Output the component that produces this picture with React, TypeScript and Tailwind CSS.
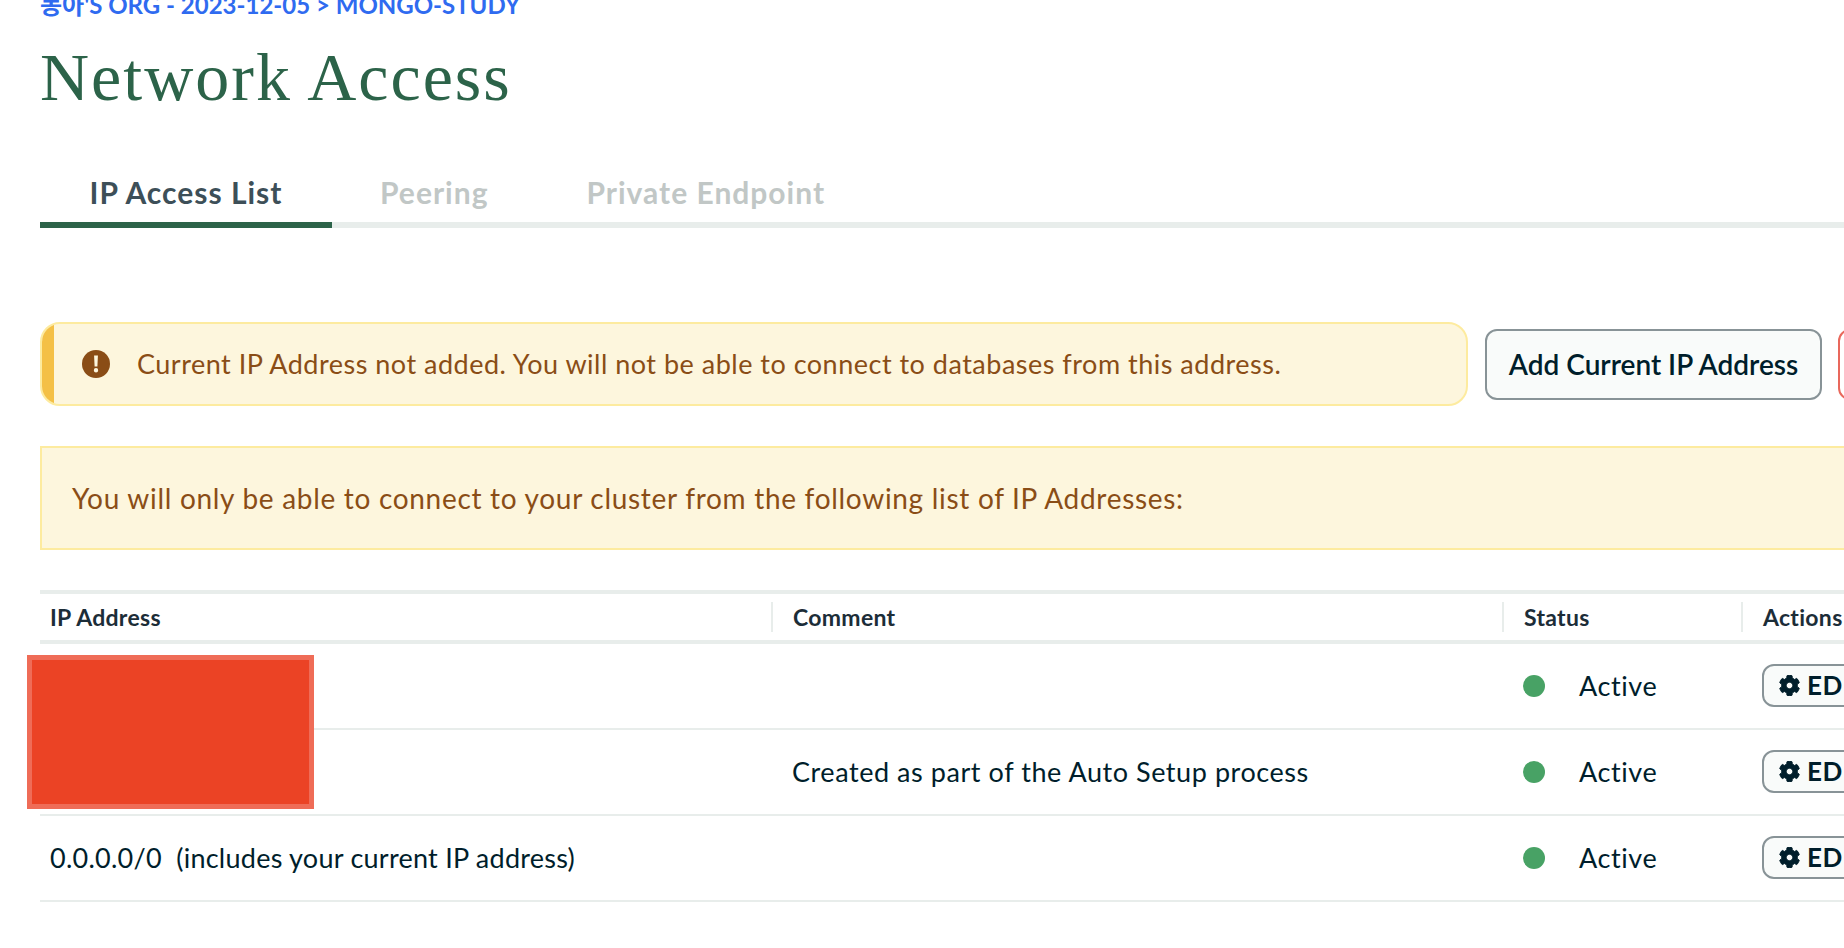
import React from "react";

const body = "[font-family:'Lato','Noto_Sans_CJK_KR',sans-serif]";

function Gear() {
  return (
    <svg viewBox="0 0 512 512" className="w-[21px] h-[21px] shrink-0" fill="#001e2b">
      <path d="M487.4 315.7l-42.6-24.6c4.3-23.2 4.3-47 0-70.2l42.6-24.6c4.9-2.8 7.1-8.6 5.5-14-11.1-35.6-30-67.8-54.7-94.6-3.8-4.1-10-5.1-14.8-2.3L380.8 110c-17.9-15.4-38.5-27.3-60.8-35.1V25.8c0-5.6-3.9-10.5-9.4-11.7-36.7-8.2-74.3-7.8-109.2 0-5.5 1.2-9.4 6.1-9.4 11.7V75c-22.2 7.9-42.8 19.8-60.8 35.1L88.7 85.5c-4.9-2.8-11-1.9-14.8 2.3-24.7 26.7-43.6 58.9-54.7 94.6-1.7 5.4.6 11.2 5.5 14L67.3 221c-4.3 23.2-4.3 47 0 70.2l-42.6 24.6c-4.9 2.8-7.1 8.6-5.5 14 11.1 35.6 30 67.8 54.7 94.6 3.8 4.1 10 5.1 14.8 2.3l42.6-24.6c17.9 15.4 38.5 27.3 60.8 35.1v49.2c0 5.6 3.9 10.5 9.4 11.7 36.7 8.2 74.3 7.8 109.2 0 5.5-1.2 9.4-6.1 9.4-11.7v-49.2c22.2-7.9 42.8-19.8 60.8-35.1l42.6 24.6c4.9 2.8 11 1.9 14.8-2.3 24.7-26.7 43.6-58.9 54.7-94.6 1.5-5.5-.7-11.3-5.6-14.1zM256 336c-44.1 0-80-35.9-80-80s35.9-80 80-80 80 35.9 80 80-35.9 80-80 80z" stroke="#001e2b" strokeWidth="24" />
    </svg>
  );
}

function Row({ ip, comment }: { ip?: string; comment?: string }) {
  return (
    <div className="flex items-center h-[86px] border-b-2 border-[#e8edeb] text-[27px] text-[#001e2b]">
      <div className="w-[752px] shrink-0 pl-[10px] whitespace-pre tracking-[0.25px]">{ip}</div>
      <div className="w-[731px] shrink-0 tracking-[0.56px]">{comment}</div>
      <div className="w-[239px] shrink-0 flex items-center">
        <span className="w-[22px] h-[22px] rounded-full bg-[#48a265] shrink-0" />
        <span className="ml-[34px] tracking-[0.6px]">Active</span>
      </div>
      <button className="flex items-center w-[130px] h-[43px] shrink-0 border-2 border-[#889397] rounded-[12px] bg-[#f9fbfa] pl-[15px] gap-[7px] text-[26px] font-bold tracking-[0.5px] -mt-[2px]">
        <Gear />
        <span>EDIT</span>
      </button>
    </div>
  );
}

export default function App() {
  return (
    <div className={`w-[1844px] h-[948px] overflow-hidden bg-white relative ${body}`}>
      <div className="w-[2000px] pl-[40px]">
        <div className="h-[12px] flex items-end">
          <div className="text-[#2f6bf0] text-[24px] font-bold leading-[26px] -mb-[6px] whitespace-pre">동아'S ORG - 2023-12-05 &gt; MONGO-STUDY</div>
        </div>
        <h1 className="mt-[30px] h-[70px] text-[#2c6349] text-[68px] leading-[70px] font-normal tracking-[2px] [font-family:'Liberation_Serif',serif]">Network Access</h1>
        <div className="mt-[56px] flex items-end h-[60px] border-b-[6px] border-[#e8edeb] text-[30px] font-bold tracking-[1px] text-[#c1c7c6]">
          <div className="w-[292px] shrink-0 h-[60px] -mb-[6px] border-b-[6px] border-[#2c6349] flex items-center justify-center text-[#3d4f58] pb-[6px]">IP Access List</div>
          <div className="pl-[48px] h-[54px] flex items-center pb-[6px]">Peering</div>
          <div className="pl-[98px] h-[54px] flex items-center pb-[6px]">Private Endpoint</div>
        </div>

        <div className="mt-[94px] flex items-center">
          <div className="relative w-[1428px] shrink-0 h-[84px] rounded-[20px] border-2 border-[#fdeb9f] bg-[#fdf6dd] flex items-center overflow-hidden text-[#8a4d16] text-[27px]">
            <span className="absolute left-[-2px] top-[-2px] bottom-[-2px] w-[14px] bg-[#f4c046]" />
            <svg viewBox="0 0 16 16" className="ml-[40px] w-[28px] h-[28px] shrink-0" fill="#8a4d16">
              <circle cx="8" cy="8" r="8" />
              <path d="M6.9 3.2h2.2l-.3 6.2H7.2z M8 10.3a1.25 1.25 0 1 1 0 2.5 1.25 1.25 0 0 1 0-2.5z" fill="#fdf6dd" />
            </svg>
            <span className="ml-[27px] tracking-[0.5px] whitespace-nowrap">Current IP Address not added. You will not be able to connect to databases from this address.</span>
          </div>
          <button className="ml-[17px] w-[337px] shrink-0 h-[71px] border-2 border-[#889397] rounded-[12px] bg-[#f9fbfa] text-[#001e2b] text-[28px] font-semibold">Add Current IP Address</button>
          <button className="ml-[16px] w-[120px] shrink-0 h-[71px] border-2 border-[#e9685c] rounded-[12px] bg-white" />
        </div>

        <div className="mt-[40px] h-[104px] w-[1900px] border-2 border-[#fdeb9f] bg-[#fdf6dd] flex items-center pl-[30px] text-[#8a4d16] text-[28px] tracking-[0.7px]">
          You will only be able to connect to your cluster from the following list of IP Addresses:
        </div>

        <div className="mt-[40px] border-t-4 border-b-4 border-[#e8edeb] h-[54px] flex items-center text-[23px] font-bold tracking-[0.3px] text-[#1c2d38]">
          <div className="w-[731px] shrink-0 pl-[10px]">IP Address</div>
          <div className="w-[731px] shrink-0 h-[30px] border-l-2 border-[#e8edeb] pl-[20px] flex items-center">Comment</div>
          <div className="w-[239px] shrink-0 h-[30px] border-l-2 border-[#e8edeb] pl-[20px] flex items-center">Status</div>
          <div className="h-[30px] border-l-2 border-[#e8edeb] pl-[20px] flex items-center">Actions</div>
        </div>
        <Row />
        <Row comment="Created as part of the Auto Setup process" />
        <Row ip="0.0.0.0/0  (includes your current IP address)" />
      </div>
      <div className="absolute left-[27px] top-[655px] w-[287px] h-[154px] bg-[#eb4325] border-[5px] border-[#ef6c57]" />
    </div>
  );
}
